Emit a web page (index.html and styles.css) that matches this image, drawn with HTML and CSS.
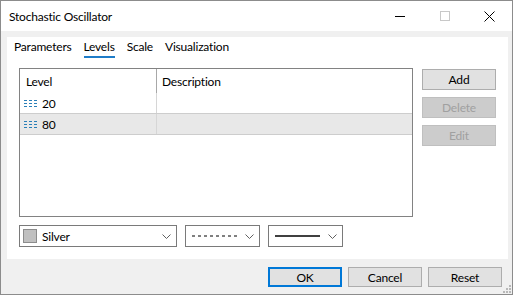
FILE: index.html
```html
<!doctype html>
<html lang="en">
  <head>
    <meta charset="UTF-8" />
    <title>Stochastic Oscillator</title>
    <link rel="stylesheet" href="styles.css">
  </head>
  <body>
    <div class="window">
      <div class="titlebar">
        <span class="title">Stochastic Oscillator</span>
        <div class="caption-buttons">
          <span class="cap">
            <svg width="10" height="10" viewBox="0 0 10 10"><path d="M0 5.5h10" stroke="#000" stroke-width="1"/></svg>
          </span>
          <span class="cap">
            <svg width="10" height="10" viewBox="0 0 10 10"><rect x="0.5" y="0.5" width="9" height="9" fill="none" stroke="#c8c8c8"/></svg>
          </span>
          <span class="cap">
            <svg width="11" height="11" viewBox="0 0 11 11"><path d="M0.5 0.5l10 10M10.5 0.5l-10 10" stroke="#000" stroke-width="1"/></svg>
          </span>
        </div>
      </div>

      <div class="client">
        <div class="panel">
          <div class="tabs">
            <span class="tab">Parameters</span>
            <span class="tab active">Levels</span>
            <span class="tab">Scale</span>
            <span class="tab">Visualization</span>
          </div>

          <div class="levels">
            <div class="listbox">
              <div class="row head">
                <div class="cell c1">Level</div>
                <div class="cell c2">Description</div>
              </div>
              <div class="row">
                <div class="cell c1">
                  <svg class="lvl-icon" width="13" height="7" viewBox="0 0 13 7">
                    <path d="M0 0.5h13M0 3.5h13M0 6.5h13" stroke="#2a7fb8" stroke-width="1" stroke-dasharray="3 2"/>
                  </svg>
                  20
                </div>
                <div class="cell c2"></div>
              </div>
              <div class="row selected">
                <div class="cell c1">
                  <svg class="lvl-icon" width="13" height="7" viewBox="0 0 13 7">
                    <path d="M0 0.5h13M0 3.5h13M0 6.5h13" stroke="#2a7fb8" stroke-width="1" stroke-dasharray="3 2"/>
                  </svg>
                  80
                </div>
                <div class="cell c2"></div>
              </div>
            </div>

            <div class="side-buttons">
              <button class="btn">Add</button>
              <button class="btn" disabled>Delete</button>
              <button class="btn" disabled>Edit</button>
            </div>
          </div>

          <div class="combos">
            <div class="combo wide">
              <span class="swatch"></span>
              <span class="combo-text">Silver</span>
              <svg class="chev" width="9" height="5" viewBox="0 0 9 5"><path d="M0.5 0.5l4 4 4-4" fill="none" stroke="#606060"/></svg>
            </div>
            <div class="combo">
              <svg class="line" width="45" height="2" viewBox="0 0 45 2"><path d="M0 1h45" stroke="#000" stroke-width="1" stroke-dasharray="3 3"/></svg>
              <svg class="chev" width="9" height="5" viewBox="0 0 9 5"><path d="M0.5 0.5l4 4 4-4" fill="none" stroke="#606060"/></svg>
            </div>
            <div class="combo">
              <svg class="line" width="45" height="2" viewBox="0 0 45 2"><path d="M0 1h45" stroke="#000" stroke-width="1.5"/></svg>
              <svg class="chev" width="9" height="5" viewBox="0 0 9 5"><path d="M0.5 0.5l4 4 4-4" fill="none" stroke="#606060"/></svg>
            </div>
          </div>
        </div>

        <div class="footer">
          <button class="btn default">OK</button>
          <button class="btn">Cancel</button>
          <button class="btn">Reset</button>
        </div>
        <svg class="grip" width="8" height="8" viewBox="0 0 8 8">
          <rect x="6" y="0" width="2" height="2" fill="#b8b8b8"/>
          <rect x="3" y="3" width="2" height="2" fill="#b8b8b8"/>
          <rect x="6" y="3" width="2" height="2" fill="#b8b8b8"/>
          <rect x="0" y="6" width="2" height="2" fill="#b8b8b8"/>
          <rect x="3" y="6" width="2" height="2" fill="#b8b8b8"/>
          <rect x="6" y="6" width="2" height="2" fill="#b8b8b8"/>
        </svg>
      </div>
    </div>
  </body>
</html>
```

FILE: styles.css
```css
html,
body {
  margin: 0;
  padding: 0;
  background: #ffffff;
  overflow: hidden;
}
body {
  font-family: Lato, "Liberation Sans", sans-serif;
  font-size: 12px;
  letter-spacing: -0.2px;
  color: #000;
}
.window {
  width: 513px;
  height: 295px;
  box-sizing: border-box;
  border: 1px solid #8c8c8c;
  background: #f0f0f0;
  display: flex;
  flex-direction: column;
}
.titlebar {
  height: 30px;
  background: #fff;
  display: flex;
  align-items: center;
  padding-left: 8px;
}
.title {
  flex: 1;
  padding-top: 1px;
}
.caption-buttons {
  display: flex;
  height: 30px;
}
.cap {
  width: 45px;
  display: flex;
  align-items: center;
  justify-content: center;
}
.cap svg {
  display: block;
}

/* client area */
.client {
  position: relative;
  flex: 1;
  padding: 6px 4px 0 6px;
}
.panel {
  background: #fff;
  height: 222px;
  box-sizing: border-box;
  display: flex;
  flex-direction: column;
}
.tabs {
  display: flex;
  gap: 12px;
  padding-left: 7px;
}
.tab {
  padding: 3px 0 2px;
  line-height: 14px;
  border-bottom: 2px solid transparent;
}
.tab.active {
  border-bottom-color: #1e7cc8;
}

.levels {
  display: flex;
  gap: 9px;
  margin: 10px 12px 0 12px;
}
.listbox {
  width: 394px;
  height: 149px;
  box-sizing: border-box;
  border: 1px solid #828282;
  background: #fff;
}
.row {
  display: flex;
  height: 20px;
  align-items: center;
}
.row.head {
  height: 24px;
}
.cell {
  height: 100%;
  display: flex;
  align-items: center;
  box-sizing: border-box;
}
.c1 {
  width: 137px;
  padding-left: 4px;
  border-right: 1px solid #d6d6d6;
}
.head .c1 {
  padding-left: 6px;
  border-right-color: #a8a8a8;
}
.c2 {
  flex: 1;
  padding-left: 5px;
}
.row.selected {
  background: #e8e8e8;
  border-top: 1px solid #cdcdcd;
  border-bottom: 1px solid #cdcdcd;
}
.lvl-icon {
  display: block;
  margin-right: 5px;
}

.side-buttons {
  display: flex;
  flex-direction: column;
  gap: 7px;
  padding-top: 1px;
}
.btn {
  font-family: Lato, "Liberation Sans", sans-serif;
  font-size: 12px;
  letter-spacing: -0.2px;
  color: #000;
  width: 74px;
  height: 21px;
  padding: 0;
  box-sizing: border-box;
  background: #e1e1e1;
  border: 1px solid #adadad;
  border-radius: 0;
}
.btn:disabled {
  background: #cccccc;
  border-color: #bfbfbf;
  color: #a0a0a0;
}
.btn.default {
  border: 2px solid #0078d7;
}

.combos {
  display: flex;
  gap: 8px;
  margin: 8px 12px 0 12px;
}
.combo {
  width: 75px;
  height: 22px;
  box-sizing: border-box;
  border: 1px solid #7a7a7a;
  display: flex;
  align-items: center;
  padding: 0 5px 0 6px;
}
.combo.wide {
  width: 158px;
  padding-left: 3px;
}
.swatch {
  width: 14px;
  height: 14px;
  box-sizing: border-box;
  background: #c0c0c0;
  border: 1px solid #8c8c8c;
  margin-right: 5px;
}
.combo-text {
  flex: 1;
}
.line {
  display: block;
  margin-right: auto;
}
.chev {
  display: block;
}

.footer {
  display: flex;
  justify-content: flex-end;
  gap: 6px;
  padding: 8px 6px 0 0;
}
.footer .btn {
  height: 20px;
}
.grip {
  position: absolute;
  right: 1px;
  bottom: 1px;
}
```
